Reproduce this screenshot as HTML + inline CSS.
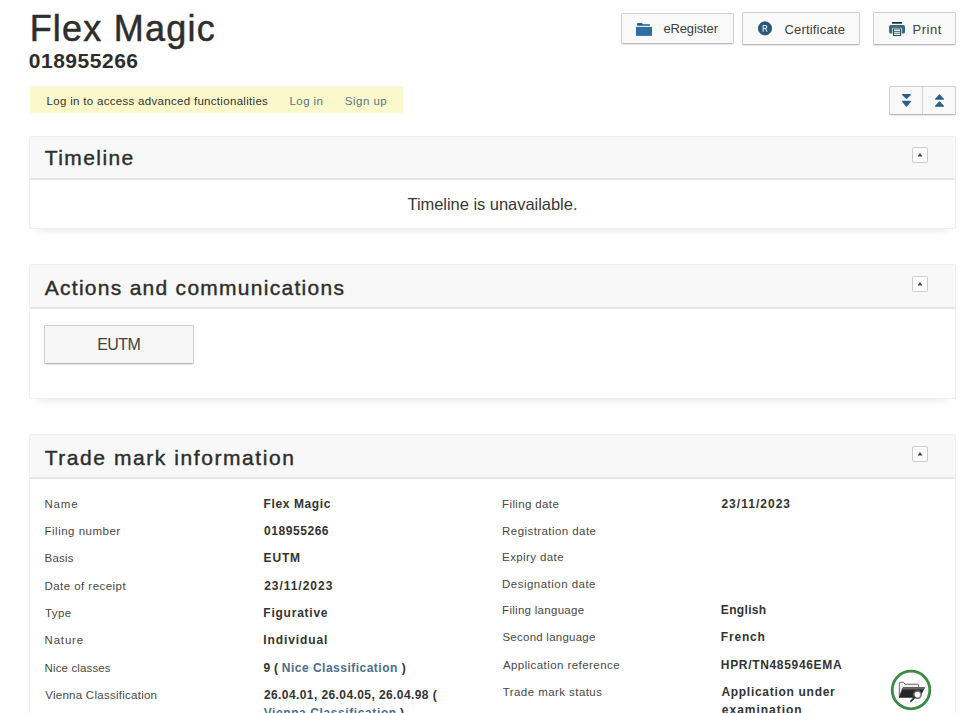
<!DOCTYPE html>
<html><head><meta charset="utf-8">
<style>
*{box-sizing:border-box;margin:0;padding:0}
html,body{width:976px;height:713px;overflow:hidden;background:#fff}
body{font-family:"Liberation Sans",sans-serif;color:#333;position:relative}
.t{position:absolute;white-space:nowrap;font-family:"Liberation Sans",sans-serif}
.login{position:absolute;left:30px;top:86px;width:373px;height:27px;background:#fbf8cb}
.btn{position:absolute;background:#f9f9f9;border:1px solid #cfcfcf;border-bottom-color:#b9b9b9;border-radius:2px;box-shadow:0 1px 1px rgba(0,0,0,.10)}
.panel{position:absolute;left:29px;width:927px;background:#fff;border:1px solid #efefef;border-radius:2px;box-shadow:0 8px 9px -8px rgba(0,0,0,.12)}
.phead{position:absolute;left:0;top:0;right:0;background:#f8f8f8;border-bottom:2px solid #e6e6e6}
.tog{position:absolute;left:882px;width:16px;height:16px;border:1px solid #cdcdcd;background:#fff;border-radius:2px}
.tog:after{content:"";position:absolute;left:4.5px;top:5px;width:5px;height:3.5px;background:#36444e;clip-path:polygon(50% 0,100% 100%,0 100%)}
</style></head><body>

<div class="login"></div>

<div class="btn" style="left:621px;top:13px;width:113px;height:31px"></div>
<div class="btn" style="left:742px;top:12px;width:118px;height:33px"></div>
<div class="btn" style="left:873px;top:12px;width:83px;height:33px"></div>

<!-- folder icon -->
<svg style="position:absolute;left:635px;top:22px" width="18" height="14" viewBox="0 0 18 14">
 <path d="M2.1 1.6Q2.1 0.9 2.8 0.9H6.6L8.2 2.3H14.4Q14.9 2.3 14.9 2.8V3.8H2.1z" fill="#2a5a7c"/>
 <path d="M1 4.9h16v9H1z" fill="#2e6ea5"/>
</svg>
<!-- R icon -->
<svg style="position:absolute;left:758px;top:21px" width="15" height="15" viewBox="0 0 15 15">
 <circle cx="7" cy="7.4" r="6.6" fill="#27587d" stroke="#1e4766" stroke-width="0.8"/>
 <path d="M4.6 10.8V4.1h2.5c1.4 0 2.2.7 2.2 1.8 0 .9-.5 1.4-1.2 1.7l1.5 3.2H8.5L7.2 7.9H5.7v2.9z M5.7 5v2h1.3c.7 0 1.1-.3 1.1-1s-.4-1-1.1-1z" fill="#d8ecf8" fill-rule="evenodd"/>
</svg>
<!-- printer icon -->
<svg style="position:absolute;left:888px;top:21px" width="18" height="16" viewBox="0 0 18 16">
 <rect x="4" y="1" width="9.9" height="1.7" fill="#122e3c"/>
 <rect x="1.1" y="4.1" width="15.9" height="8.5" rx="1.6" fill="#3a6a80"/>
 <rect x="4.3" y="6.9" width="9.5" height="8.6" fill="#f4fbff"/>
 <rect x="5.45" y="7.95" width="7.2" height="6.6" fill="#fff" stroke="#1f4252" stroke-width="1"/>
 <rect x="5.45" y="9.9" width="7.2" height="0.8" fill="#1f4252"/>
 <rect x="5.45" y="11.8" width="7.2" height="0.8" fill="#1f4252"/>
</svg>

<!-- expand/collapse -->
<div class="btn" style="left:889px;top:86px;width:34px;height:29px;border-radius:2px 0 0 2px"></div>
<div class="btn" style="left:922px;top:86px;width:34px;height:29px;border-radius:0 2px 2px 0"></div>
<svg style="position:absolute;left:901px;top:93px" width="11" height="15" viewBox="0 0 11 15">
 <path d="M1.6 1.6h7.8L5.5 5.4z M1.6 8.4h7.8L5.5 13z" fill="#2c5f8b" stroke="#2c5f8b" stroke-width="1.3" stroke-linejoin="round"/>
</svg>
<svg style="position:absolute;left:934px;top:93px" width="11" height="15" viewBox="0 0 11 15">
 <path d="M1.6 6.1h7.8L5.5 1.9z M1.6 13.2h7.8L5.5 9z" fill="#2c5f8b" stroke="#2c5f8b" stroke-width="1.3" stroke-linejoin="round"/>
</svg>

<div class="panel" style="top:136px;height:93px">
 <div class="phead" style="height:43px"></div>
 <div class="tog" style="top:10px"></div>
</div>

<div class="panel" style="top:264px;height:135px">
 <div class="phead" style="height:44px"></div>
 <div class="tog" style="top:11px"></div>
 <div class="btn" style="left:14px;top:60px;width:150px;height:39px;background:#f7f7f7"></div>
</div>

<div class="panel" style="top:434px;height:300px">
 <div class="phead" style="height:44px"></div>
 <div class="tog" style="top:11px"></div>
</div>

<!-- green circle -->
<svg style="position:absolute;left:890px;top:669px" width="42" height="42" viewBox="0 0 42 42">
 <circle cx="21" cy="21" r="18.8" fill="#fff" stroke="#3b8a48" stroke-width="2.8"/>
 <path d="M9.3 28.5V14.2Q9.3 13.3 10.2 13.3H13.6L15 15.2H27.6Q28.6 15.2 28.6 16.2V19H12.5L9.6 28.5z" fill="#eee" stroke="#555" stroke-width="0.9"/>
 <path d="M13.3 18.2H35L30 28.8H8.8z" fill="#262626"/>
 <path d="M13.3 18.2H35L34 20.5H12.6z" fill="#666"/>
 <circle cx="27.5" cy="25.6" r="3.6" fill="#fff" stroke="#6a6a6a" stroke-width="1.4"/>
 <path d="M24.8 28.4L21 32.2" stroke="#2b2b2b" stroke-width="1.8" stroke-linecap="round"/>
</svg>

<span class='t' style='left:29.63px;top:11px;font-size:36px;line-height:36px;font-weight:400;color:#2d2d2d;letter-spacing:1.229px;-webkit-text-stroke:0.5px #2d2d2d'>Flex Magic</span>
<span class='t' style='left:28.75px;top:50px;font-size:21px;line-height:21px;font-weight:700;color:#2d2d2d;letter-spacing:0.522px'>018955266</span>
<span class='t' style='left:46.59px;top:96px;font-size:11.5px;line-height:11.5px;font-weight:400;color:#333;letter-spacing:0.306px'>Log in to access advanced functionalities</span>
<span class='t' style='left:289.49px;top:96px;font-size:11.5px;line-height:11.5px;font-weight:400;color:#587486;letter-spacing:0.428px'>Log in</span>
<span class='t' style='left:344.86px;top:96px;font-size:11.5px;line-height:11.5px;font-weight:400;color:#587486;letter-spacing:0.483px'>Sign up</span>
<span class='t' style='left:663.39px;top:22px;font-size:13px;line-height:13px;font-weight:400;color:#404040;letter-spacing:-0.129px'>eRegister</span>
<span class='t' style='left:784.41px;top:23px;font-size:13px;line-height:13px;font-weight:400;color:#404040;letter-spacing:0.193px'>Certificate</span>
<span class='t' style='left:912.42px;top:23px;font-size:13px;line-height:13px;font-weight:400;color:#404040;letter-spacing:0.548px'>Print</span>
<span class='t' style='left:44.79px;top:147px;font-size:21px;line-height:21px;font-weight:400;color:#2d2d2d;letter-spacing:1.411px;-webkit-text-stroke:0.4px #2d2d2d'>Timeline</span>
<span class='t' style='left:44.73px;top:277px;font-size:21px;line-height:21px;font-weight:400;color:#2d2d2d;letter-spacing:1.276px;-webkit-text-stroke:0.4px #2d2d2d'>Actions and communications</span>
<span class='t' style='left:44.69px;top:447px;font-size:21px;line-height:21px;font-weight:400;color:#2d2d2d;letter-spacing:1.567px;-webkit-text-stroke:0.4px #2d2d2d'>Trade mark information</span>
<span class='t' style='left:407.48px;top:196px;font-size:16.5px;line-height:16.5px;font-weight:400;color:#383838;letter-spacing:-0.039px'>Timeline is unavailable.</span>
<span class='t' style='left:97.24px;top:337px;font-size:16px;line-height:16px;font-weight:400;color:#404040;letter-spacing:-0.559px'>EUTM</span>
<span class='t' style='left:44.49px;top:499px;font-size:11.5px;line-height:11.5px;font-weight:400;color:#484848;letter-spacing:0.821px'>Name</span>
<span class='t' style='left:44.51px;top:526px;font-size:11.5px;line-height:11.5px;font-weight:400;color:#484848;letter-spacing:0.502px'>Filing number</span>
<span class='t' style='left:44.51px;top:553px;font-size:11.5px;line-height:11.5px;font-weight:400;color:#484848;letter-spacing:0.206px'>Basis</span>
<span class='t' style='left:44.49px;top:581px;font-size:11.5px;line-height:11.5px;font-weight:400;color:#484848;letter-spacing:0.450px'>Date of receipt</span>
<span class='t' style='left:45.11px;top:608px;font-size:11.5px;line-height:11.5px;font-weight:400;color:#484848;letter-spacing:0.350px'>Type</span>
<span class='t' style='left:44.49px;top:635px;font-size:11.5px;line-height:11.5px;font-weight:400;color:#484848;letter-spacing:0.837px'>Nature</span>
<span class='t' style='left:44.49px;top:663px;font-size:11.5px;line-height:11.5px;font-weight:400;color:#484848;letter-spacing:0.143px'>Nice classes</span>
<span class='t' style='left:45.25px;top:690px;font-size:11.5px;line-height:11.5px;font-weight:400;color:#484848;letter-spacing:0.260px'>Vienna Classification</span>
<span class='t' style='left:502.11px;top:499px;font-size:11.5px;line-height:11.5px;font-weight:400;color:#484848;letter-spacing:0.363px'>Filing date</span>
<span class='t' style='left:502.11px;top:526px;font-size:11.5px;line-height:11.5px;font-weight:400;color:#484848;letter-spacing:0.428px'>Registration date</span>
<span class='t' style='left:502.11px;top:552px;font-size:11.5px;line-height:11.5px;font-weight:400;color:#484848;letter-spacing:0.394px'>Expiry date</span>
<span class='t' style='left:502.09px;top:579px;font-size:11.5px;line-height:11.5px;font-weight:400;color:#484848;letter-spacing:0.472px'>Designation date</span>
<span class='t' style='left:502.11px;top:605px;font-size:11.5px;line-height:11.5px;font-weight:400;color:#484848;letter-spacing:0.282px'>Filing language</span>
<span class='t' style='left:502.46px;top:632px;font-size:11.5px;line-height:11.5px;font-weight:400;color:#484848;letter-spacing:0.242px'>Second language</span>
<span class='t' style='left:502.88px;top:660px;font-size:11.5px;line-height:11.5px;font-weight:400;color:#484848;letter-spacing:0.433px'>Application reference</span>
<span class='t' style='left:502.71px;top:687px;font-size:11.5px;line-height:11.5px;font-weight:400;color:#484848;letter-spacing:0.437px'>Trade mark status</span>
<span class='t' style='left:263.55px;top:498px;font-size:12px;line-height:12px;font-weight:700;color:#333;letter-spacing:0.607px'>Flex Magic</span>
<span class='t' style='left:264.07px;top:525px;font-size:12px;line-height:12px;font-weight:700;color:#333;letter-spacing:0.550px'>018955266</span>
<span class='t' style='left:263.55px;top:552px;font-size:12px;line-height:12px;font-weight:700;color:#333;letter-spacing:0.842px'>EUTM</span>
<span class='t' style='left:264.13px;top:580px;font-size:12px;line-height:12px;font-weight:700;color:#333;letter-spacing:0.976px'>23/11/2023</span>
<span class='t' style='left:263.35px;top:607px;font-size:12px;line-height:12px;font-weight:700;color:#333;letter-spacing:0.762px'>Figurative</span>
<span class='t' style='left:263.35px;top:634px;font-size:12px;line-height:12px;font-weight:700;color:#333;letter-spacing:0.890px'>Individual</span>
<span class='t' style='left:263.93px;top:689px;font-size:12px;line-height:12px;font-weight:700;color:#333;letter-spacing:0.411px'>26.04.01, 26.04.05, 26.04.98 (</span>
<span class='t' style='left:721.43px;top:498px;font-size:12px;line-height:12px;font-weight:700;color:#333;letter-spacing:1.020px'>23/11/2023</span>
<span class='t' style='left:720.85px;top:604px;font-size:12px;line-height:12px;font-weight:700;color:#333;letter-spacing:0.331px'>English</span>
<span class='t' style='left:720.85px;top:631px;font-size:12px;line-height:12px;font-weight:700;color:#333;letter-spacing:0.801px'>French</span>
<span class='t' style='left:720.85px;top:659px;font-size:12px;line-height:12px;font-weight:700;color:#333;letter-spacing:0.669px'>HPR/TN485946EMA</span>
<span class='t' style='left:721.40px;top:686px;font-size:12px;line-height:12px;font-weight:700;color:#333;letter-spacing:0.710px'>Application under</span>
<span class='t' style='left:721.87px;top:704px;font-size:12px;line-height:12px;font-weight:700;color:#333;letter-spacing:0.969px'>examination</span>
<span class='t' style='left:263.40px;top:662px;font-size:12px;line-height:12px;font-weight:700;color:#333;letter-spacing:0.000px'>9</span>
<span class='t' style='left:274.05px;top:662px;font-size:12px;line-height:12px;font-weight:700;color:#333;letter-spacing:0.000px'>(</span>
<span class='t' style='left:281.75px;top:662px;font-size:12px;line-height:12px;font-weight:700;color:#4a6f8c;letter-spacing:0.494px'>Nice Classification</span>
<span class='t' style='left:401.85px;top:662px;font-size:12px;line-height:12px;font-weight:700;color:#333;letter-spacing:0.000px'>)</span>
<span class='t' style='left:263.68px;top:707px;font-size:12px;line-height:12px;font-weight:700;color:#4a6f8c;letter-spacing:0.599px'>Vienna Classification</span>
<span class='t' style='left:399.95px;top:707px;font-size:12px;line-height:12px;font-weight:700;color:#333;letter-spacing:0.000px'>)</span>
</body></html>
